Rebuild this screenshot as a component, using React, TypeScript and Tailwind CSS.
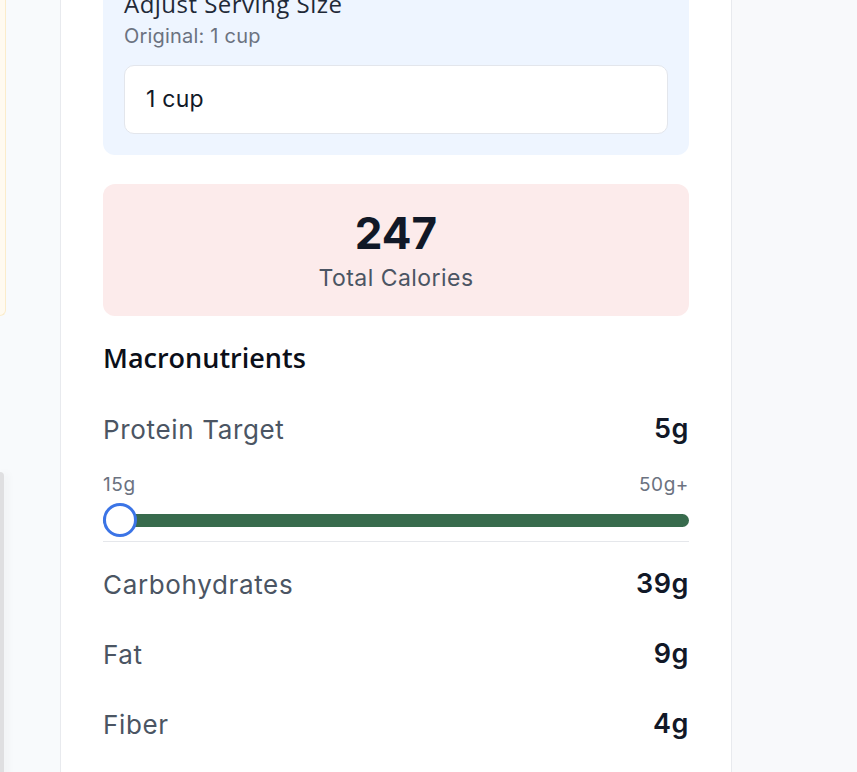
import React from "react";

const body = { fontFamily: "Inter, 'Noto Sans', sans-serif" };
const head = { fontFamily: "'Open Sans', Inter, sans-serif" };

function Row({ label, value }: { label: string; value: string }) {
  return (
    <div className="flex h-[36px] items-center justify-between">
      <span className="text-[26px] tracking-[0.025em] text-[#4b5563]">{label}</span>
      <span className="text-[27px] font-semibold tracking-[0.02em] text-[#111827]">{value}</span>
    </div>
  );
}

export default function App() {
  return (
    <div className="flex h-[772px] w-[857px] overflow-hidden bg-[#f8f9fb]" style={body}>
      {/* left column */}
      <div className="flex w-[60px] shrink-0 flex-col bg-[#f8fafc]">
        <div className="h-[316px] w-[6px] shrink-0 rounded-br-[10px] border-b border-r border-[#fbeccb] bg-[#fffaf0]" />
        <div className="mt-[156px] h-[400px] w-[4px] shrink-0 rounded-tr-[6px] bg-[#dfdfe1] shadow-[3px_0_8px_rgba(0,0,0,0.06)]" />
      </div>

      {/* card */}
      <div className="w-[672px] shrink-0 border-x border-[#e8eaee] bg-white px-[42px]">
        <div className="-mt-[27px] flex flex-col">
          {/* serving size */}
          <div className="rounded-[12px] bg-[#eef5ff] p-[21px]">
            <div className="h-[28px] text-[24px] font-medium leading-[20px] tracking-[0.02em] text-[#1f2937]" style={head}>
              Adjust Serving Size
            </div>
            <div className="h-[28px] text-[20px] leading-[28px] tracking-[0.01em] text-[#6b7280]">Original: 1 cup</div>
            <div className="mt-[15px] flex h-[69px] items-center rounded-[10px] border border-[#e3e6ec] bg-white px-[21px] text-[23px] tracking-[0.01em] text-[#111827]">
              1 cup
            </div>
          </div>

          {/* calories */}
          <div className="mt-[29px] flex h-[132px] flex-col items-center rounded-[12px] bg-[#fcebeb] pt-[25px]">
            <div className="h-[48px] text-[44px] font-bold leading-[48px] text-[#111827]">247</div>
            <div className="mt-[7px] h-[28px] text-[23px] leading-[28px] tracking-[0.02em] text-[#4b5563]">Total Calories</div>
          </div>

          {/* macros */}
          <div className="mt-[26px] h-[32px] text-[27px] font-semibold leading-[32px] text-[#0b0f19]" style={head}>
            Macronutrients
          </div>

          <div className="mt-[37px]">
            <Row label="Protein Target" value="5g" />
          </div>

          <div className="mt-[26px] flex h-[24px] items-center justify-between text-[19px] tracking-[0.03em] text-[#6b7280]">
            <span>15g</span>
            <span>50g+</span>
          </div>

          <div className="relative mt-[6px] flex h-[34px] items-center">
            <div className="h-[13px] w-full rounded-full bg-[#386b4d]" />
            <div className="absolute left-0 top-0 h-[34px] w-[34px] rounded-full border-[3px] border-[#3b74e6] bg-white" />
          </div>

          <div className="mt-[4px] h-px bg-[#e5e7eb]" />

          <div className="mt-[24px] flex flex-col gap-[34px]">
            <Row label="Carbohydrates" value="39g" />
            <Row label="Fat" value="9g" />
            <Row label="Fiber" value="4g" />
          </div>
        </div>
      </div>

      <div className="flex-1 bg-[#f8f9fb]" />
    </div>
  );
}
